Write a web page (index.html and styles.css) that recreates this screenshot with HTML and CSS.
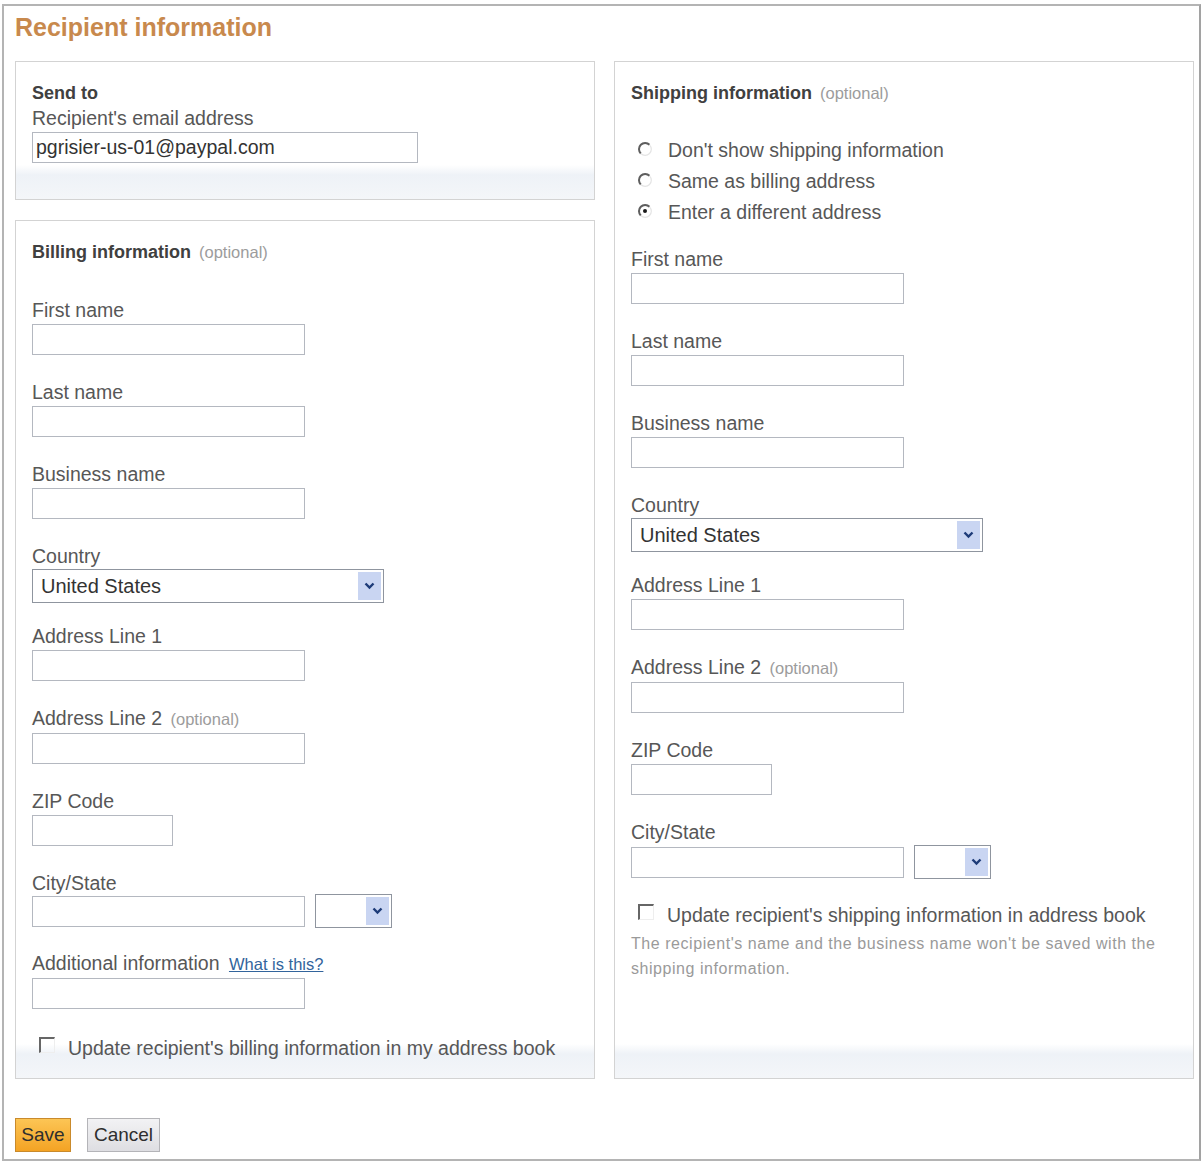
FILE: index.html
```html
<!DOCTYPE html>
<html lang="en">

<head>
    <meta charset="UTF-8">
    <title>Recipient information</title>
    <link rel="stylesheet" href="styles.css">
</head>

<body>

    <div class="page">
        <h1 class="title">Recipient information</h1>

        <div class="columns">
            <div class="col">
                <div class="box box-send">
                    <h2 class="box-title">Send to</h2>
                    <label class="label">Recipient's email address</label>
                    <input type="text" class="text text-email" value="pgrisier-us-01@paypal.com">
                </div>

                <div class="box box-billing">
                    <h2 class="box-title">Billing information <span class="optional">(optional)</span></h2>

                    <div class="field">
                        <label class="label">First name</label>
                        <input type="text" class="text">
                    </div>
                    <div class="field">
                        <label class="label">Last name</label>
                        <input type="text" class="text">
                    </div>
                    <div class="field">
                        <label class="label">Business name</label>
                        <input type="text" class="text">
                    </div>
                    <div class="field field-select">
                        <label class="label">Country</label>
                        <div class="select">
                            <span class="select-value">United States</span>
                            <span class="select-arrow"><svg width="11" height="8" viewBox="0 0 11 8"><path d="M1.5 1.5 L5.5 5.5 L9.5 1.5" fill="none" stroke="#1d3b78" stroke-width="2.4"/></svg></span>
                        </div>
                    </div>
                    <div class="field">
                        <label class="label">Address Line 1</label>
                        <input type="text" class="text">
                    </div>
                    <div class="field">
                        <label class="label">Address Line 2 <span class="optional">(optional)</span></label>
                        <input type="text" class="text">
                    </div>
                    <div class="field">
                        <label class="label">ZIP Code</label>
                        <input type="text" class="text text-zip">
                    </div>
                    <div class="field field-row">
                        <label class="label">City/State</label>
                        <div class="row">
                            <input type="text" class="text">
                            <div class="select select-state">
                                <span class="select-value"></span>
                                <span class="select-arrow"><svg width="11" height="8" viewBox="0 0 11 8"><path d="M1.5 1.5 L5.5 5.5 L9.5 1.5" fill="none" stroke="#1d3b78" stroke-width="2.4"/></svg></span>
                            </div>
                        </div>
                    </div>
                    <div class="field">
                        <label class="label">Additional information <a href="#" class="help">What is this?</a></label>
                        <input type="text" class="text">
                    </div>

                    <div class="check">
                        <span class="checkbox"></span>
                        <span>Update recipient's billing information in my address book</span>
                    </div>
                </div>
            </div>

            <div class="box box-shipping">
                <h2 class="box-title">Shipping information <span class="optional">(optional)</span></h2>

                <div class="radios">
                    <div class="radio">
                        <svg class="radio-icon" width="14" height="14" viewBox="0 0 14 14"><path d="M11.5 2.8 A6 6 0 0 0 2.8 11.5" fill="none" stroke="#5e5e5e" stroke-width="2"/><path d="M2.8 11.5 A6 6 0 0 0 11.5 2.8" fill="none" stroke="#e4e4e4" stroke-width="1.2"/></svg>
                        <span>Don't show shipping information</span>
                    </div>
                    <div class="radio">
                        <svg class="radio-icon" width="14" height="14" viewBox="0 0 14 14"><path d="M11.5 2.8 A6 6 0 0 0 2.8 11.5" fill="none" stroke="#5e5e5e" stroke-width="2"/><path d="M2.8 11.5 A6 6 0 0 0 11.5 2.8" fill="none" stroke="#e4e4e4" stroke-width="1.2"/></svg>
                        <span>Same as billing address</span>
                    </div>
                    <div class="radio">
                        <svg class="radio-icon" width="14" height="14" viewBox="0 0 14 14"><path d="M11.5 2.8 A6 6 0 0 0 2.8 11.5" fill="none" stroke="#5e5e5e" stroke-width="2"/><path d="M2.8 11.5 A6 6 0 0 0 11.5 2.8" fill="none" stroke="#e4e4e4" stroke-width="1.2"/><circle cx="7" cy="7" r="2" fill="#1a1a1a"/></svg>
                        <span>Enter a different address</span>
                    </div>
                </div>

                <div class="field">
                    <label class="label">First name</label>
                    <input type="text" class="text">
                </div>
                <div class="field">
                    <label class="label">Last name</label>
                    <input type="text" class="text">
                </div>
                <div class="field">
                    <label class="label">Business name</label>
                    <input type="text" class="text">
                </div>
                <div class="field field-select">
                    <label class="label">Country</label>
                    <div class="select">
                        <span class="select-value">United States</span>
                        <span class="select-arrow"><svg width="11" height="8" viewBox="0 0 11 8"><path d="M1.5 1.5 L5.5 5.5 L9.5 1.5" fill="none" stroke="#1d3b78" stroke-width="2.4"/></svg></span>
                    </div>
                </div>
                <div class="field">
                    <label class="label">Address Line 1</label>
                    <input type="text" class="text">
                </div>
                <div class="field">
                    <label class="label">Address Line 2 <span class="optional">(optional)</span></label>
                    <input type="text" class="text">
                </div>
                <div class="field">
                    <label class="label">ZIP Code</label>
                    <input type="text" class="text text-zip">
                </div>
                <div class="field field-row">
                    <label class="label">City/State</label>
                    <div class="row">
                        <input type="text" class="text">
                        <div class="select select-state">
                            <span class="select-value"></span>
                            <span class="select-arrow"><svg width="11" height="8" viewBox="0 0 11 8"><path d="M1.5 1.5 L5.5 5.5 L9.5 1.5" fill="none" stroke="#1d3b78" stroke-width="2.4"/></svg></span>
                        </div>
                    </div>
                </div>

                <div class="check">
                    <span class="checkbox"></span>
                    <span>Update recipient's shipping information in address book</span>
                </div>
                <p class="note">The recipient's name and the business name won't be saved with the<br>shipping information.</p>
            </div>
        </div>

        <div class="actions">
            <button class="btn btn-save">Save</button>
            <button class="btn btn-cancel">Cancel</button>
        </div>
    </div>

</body>

</html>
```

FILE: styles.css
```css
body {
    margin: 0;
    font-family: "Liberation Sans", Arial, sans-serif;
    color: #575757;
    background-color: #fff;
}

.page {
    box-sizing: border-box;
    width: 1199px;
    height: 1157px;
    margin: 4px 0 0 2px;
    border: 2px solid #b4b4b4;
    border-right-color: #a2a2a2;
    padding: 6px 5px 0 11px;
}

.title {
    margin: 0 0 19px;
    font-size: 25px;
    line-height: 30px;
    font-weight: bold;
    color: #c8894d;
}

.columns {
    display: grid;
    grid-template-columns: 580px 580px;
    column-gap: 19px;
}

.col {
    display: flex;
    flex-direction: column;
    gap: 20px;
}

.box {
    box-sizing: border-box;
    border: 1px solid #d3d3d3;
    padding: 20px 16px 19px;
    background: linear-gradient(to bottom, #fff 0, #fff calc(100% - 34px), #eef2f7 calc(100% - 24px), #f4f6f9 100%);
}

.box-send {
    padding-bottom: 36px;
}

.box-billing {
    flex: 1;
}

.box-title {
    margin: 0 0 36px;
    font-size: 18px;
    line-height: 22px;
    font-weight: bold;
    color: #404040;
}

.box-send .box-title {
    margin-bottom: 3px;
}

.box-shipping .box-title {
    margin-bottom: 35px;
}

.optional {
    font-size: 16.5px;
    font-weight: normal;
    color: #9c9c9c;
    margin-left: 3px;
}

.label {
    display: block;
    font-size: 19.5px;
    line-height: 22px;
    margin-bottom: 3px;
    color: #575757;
}

.field {
    margin-bottom: 26px;
}

.field-select .label {
    margin-bottom: 2px;
}

.field-select {
    margin-bottom: 22px;
}

.field-row {
    margin-bottom: 24px;
}

.field-row .label {
    margin-bottom: 0;
}

.box-shipping .field-row .label {
    margin-bottom: 2px;
}

.text {
    display: block;
    box-sizing: border-box;
    width: 273px;
    height: 31px;
    margin: 0;
    padding: 0 3px;
    border: 1px solid #b4b8c0;
    background-color: #fff;
    font-family: "Liberation Sans", Arial, sans-serif;
    font-size: 19.5px;
    color: #333;
}

.text-email {
    width: 386px;
}

.text-zip {
    width: 141px;
}

.row {
    display: flex;
    align-items: center;
}

.select {
    box-sizing: border-box;
    display: flex;
    width: 352px;
    height: 34px;
    padding: 2px;
    border: 1px solid #8f959f;
    background-color: #fff;
}

.select-value {
    flex: 1;
    padding-left: 6px;
    font-size: 20px;
    line-height: 28px;
    color: #333;
}

.select-arrow {
    width: 23px;
    display: flex;
    align-items: center;
    justify-content: center;
    background-color: #c9d5f2;
}

.select-state {
    width: 77px;
    margin-left: 10px;
}

.help {
    font-size: 16.5px;
    color: #32649c;
    margin-left: 4px;
}

/* radio and checkbox glyphs, classic windows look */

.radios {
    margin-bottom: 25px;
}

.radio {
    display: flex;
    align-items: center;
    font-size: 19.5px;
    line-height: 22px;
    margin-bottom: 9px;
}

.radio:last-child {
    margin-bottom: 0;
}

.radio-icon {
    margin: -3px 16px 0 7px;
    flex-shrink: 0;
}

.check {
    display: flex;
    align-items: flex-start;
    margin-top: 28px;
    font-size: 19.5px;
    line-height: 22px;
}

.box-shipping .check {
    margin-top: 25px;
}

.checkbox {
    box-sizing: border-box;
    width: 16px;
    height: 16px;
    margin: 0 13px 0 7px;
    border-top: 2px solid #666;
    border-left: 2px solid #666;
    border-right: 1px solid #eee;
    border-bottom: 1px solid #eee;
    flex-shrink: 0;
}

.note {
    margin: 5px 0 0;
    font-size: 16px;
    line-height: 25px;
    letter-spacing: 0.55px;
    color: #9a9a9a;
}

.actions {
    display: flex;
    gap: 16px;
    margin-top: 39px;
}

.btn {
    box-sizing: border-box;
    height: 34px;
    padding: 0 5px;
    font-family: "Liberation Sans", Arial, sans-serif;
    font-size: 19px;
    color: #2e2e2e;
    cursor: pointer;
}

.btn-save {
    width: 56px;
    border: 1px solid #c98a2c;
    background: linear-gradient(to bottom, #fcc555, #f4a324);
}

.btn-cancel {
    width: 73px;
    border: 1px solid #b4b4b8;
    background: linear-gradient(to bottom, #f2f2f4, #dedee2);
}
```
